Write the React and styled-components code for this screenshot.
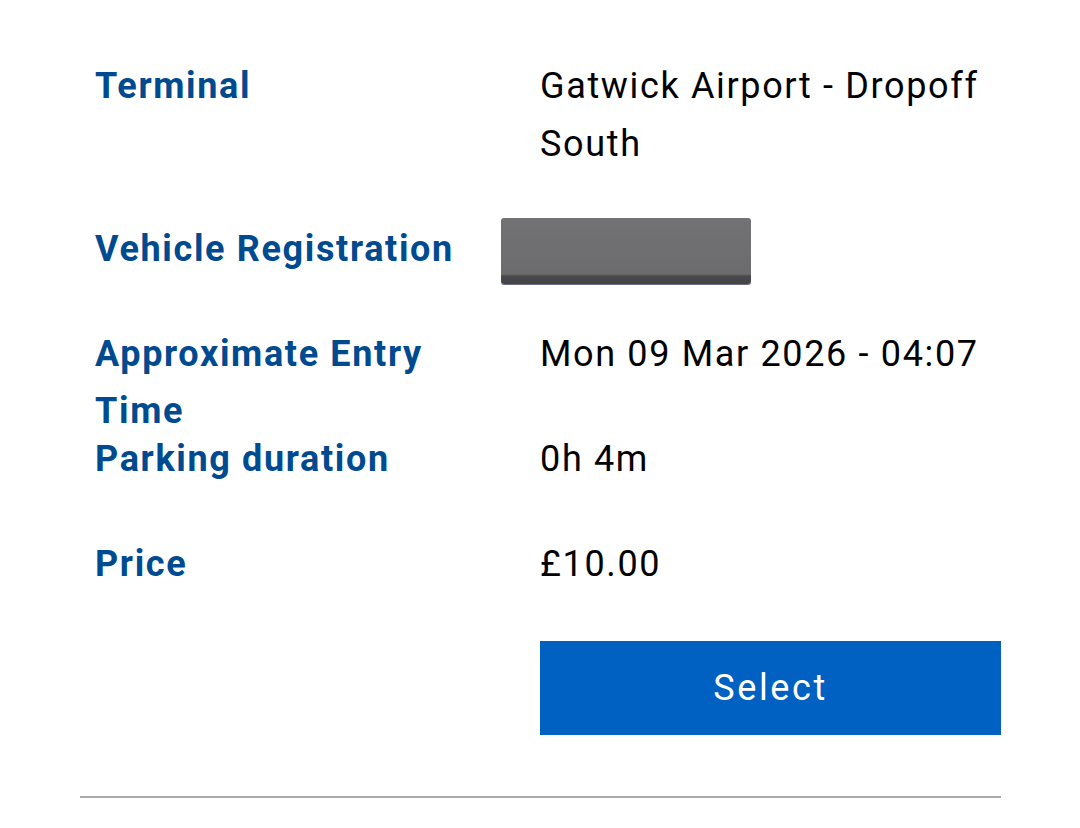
import React from 'react'
import styled, { createGlobalStyle } from 'styled-components'

const colors = {
    label: '#004a8f',
    text: '#000000',
    button: '#0061c2',
    rule: '#ababab',
}

const GlobalStyle = createGlobalStyle`
    body {
        margin: 0;
        background: #ffffff;
        font-family: Roboto, "Liberation Sans", sans-serif;
    }
`

const Card = styled.section`
    margin: 0 79px 0 80px;
    padding-top: 58px;
    font-size: 36px;
    line-height: 57.6px;
    letter-spacing: 1.65px;
`

const Row = styled.div`
    display: grid;
    grid-template-columns: 460px 1fr;
    margin-bottom: 47.5px;
`

const Label = styled.div`
    height: 57.6px;
    padding: 0 50px 0 15px;
    font-weight: 700;
    color: ${colors.label};
`

const Value = styled.div`
    color: ${colors.text};
`

// redaction box over the number plate
const Plate = styled.div`
    width: 250px;
    height: 66px;
    margin: -3px 0 -5.4px -39px;
    border-radius: 3px;
    background: linear-gradient(to bottom,
        #727274 0%,
        #6c6c6e 85%,
        #4a4a4c 88%,
        #434345 100%);
    box-shadow: 0 1px 0 #6a6f8a;
`

const Actions = styled.div`
    display: grid;
    grid-template-columns: 460px 1fr;
    margin-bottom: 61px;
`

const SelectButton = styled.button`
    grid-column: 2;
    height: 94px;
    border: 0;
    padding: 0;
    background: ${colors.button};
    color: #ffffff;
    font-family: Roboto, "Liberation Sans", sans-serif;
    font-size: 36px;
    letter-spacing: 2.6px;
    cursor: pointer;
`

const Divider = styled.hr`
    margin: 0;
    border: 0;
    border-top: 2px solid ${colors.rule};
`

const details = [
    ['Terminal', 'Gatwick Airport - Dropoff South'],
    ['Vehicle Registration', null],
    ['Approximate Entry Time', 'Mon 09 Mar 2026 - 04:07'],
    ['Parking duration', '0h 4m'],
    ['Price', '£10.00'],
]

const App = () => (
    <>
        <GlobalStyle />
        <Card>
            {details.map(([label, value]) => (
                <Row key={label}>
                    <Label>{label}</Label>
                    {value === null ? <Plate /> : <Value>{value}</Value>}
                </Row>
            ))}
            <Actions>
                <SelectButton>Select</SelectButton>
            </Actions>
            <Divider />
        </Card>
    </>
)

export default App
